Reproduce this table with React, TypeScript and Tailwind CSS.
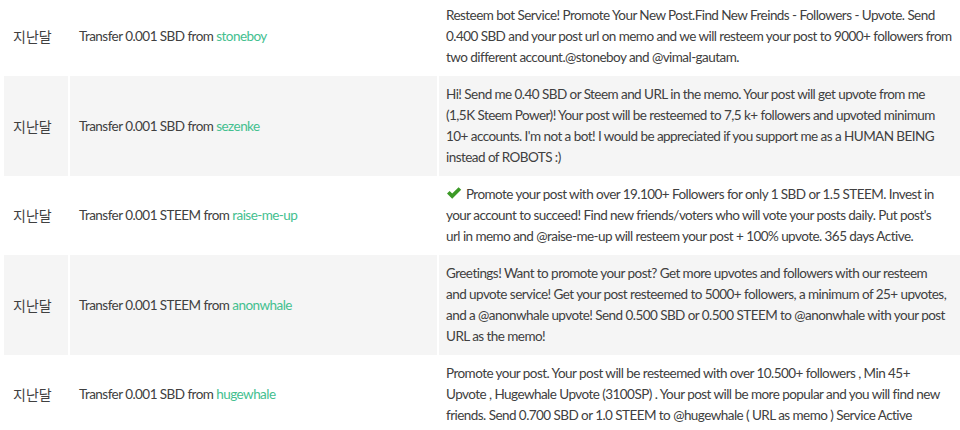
import React from "react";

type Row = {
  amount: string;
  from: string;
  lines: string[];
  check?: boolean;
};

const rows: Row[] = [
  {
    amount: "0.001 SBD",
    from: "stoneboy",
    lines: [
      "Resteem bot Service! Promote Your New Post.Find New Freinds - Followers - Upvote. Send",
      "0.400 SBD and your post url on memo and we will resteem your post to 9000+ followers from",
      "two different account.@stoneboy and @vimal-gautam.",
    ],
  },
  {
    amount: "0.001 SBD",
    from: "sezenke",
    lines: [
      "Hi! Send me 0.40 SBD or Steem and URL in the memo. Your post will get upvote from me",
      "(1,5K Steem Power)! Your post will be resteemed to 7,5 k+ followers and upvoted minimum",
      "10+ accounts. I'm not a bot! I would be appreciated if you support me as a HUMAN BEING",
      "instead of ROBOTS :)",
    ],
  },
  {
    amount: "0.001 STEEM",
    from: "raise-me-up",
    check: true,
    lines: [
      " Promote your post with over 19.100+ Followers for only 1 SBD or 1.5 STEEM. Invest in",
      "your account to succeed! Find new friends/voters who will vote your posts daily. Put post's",
      "url in memo and @raise-me-up will resteem your post + 100% upvote. 365 days Active.",
    ],
  },
  {
    amount: "0.001 STEEM",
    from: "anonwhale",
    lines: [
      "Greetings! Want to promote your post? Get more upvotes and followers with our resteem",
      "and upvote service! Get your post resteemed to 5000+ followers, a minimum of 25+ upvotes,",
      "and a @anonwhale upvote! Send 0.500 SBD or 0.500 STEEM to @anonwhale with your post",
      "URL as the memo!",
    ],
  },
  {
    amount: "0.001 SBD",
    from: "hugewhale",
    lines: [
      "Promote your post. Your post will be resteemed with over 10.500+ followers , Min 45+",
      "Upvote , Hugewhale Upvote (3100SP) . Your post will be more popular and you will find new",
      "friends. Send 0.700 SBD or 1.0 STEEM to @hugewhale ( URL as memo ) Service Active",
    ],
  },
];

function Check() {
  return (
    <svg width="16" height="14" viewBox="0 0 16 14" className="inline-block align-[-1px] mr-[1px]">
      <path d="M1 7.5 L3.6 5 L6.2 7.6 L12.6 1.2 L15.2 3.8 L6.2 12.8 Z" fill="#3c9a27" />
    </svg>
  );
}

export default function App() {
  return (
    <div
      className="w-[960px] h-[430px] overflow-hidden bg-white text-[#404040]"
      style={{ fontFamily: "Lato, 'Noto Sans CJK KR', sans-serif" }}
    >
      <div className="-mt-[3px] ml-[4px] grid grid-cols-[64px_367px_1fr] gap-x-[2px] text-[13.5px] leading-[21px] tracking-[-0.55px]">
        {rows.map((r, i) => {
          const bg = i % 2 === 1 ? "bg-[#f5f5f5]" : "bg-white";
          return (
            <React.Fragment key={i}>
              <div
                className={`${bg} py-2 pl-[9px] flex items-center text-[14px] tracking-normal`}
                style={{ fontFamily: "'Noto Sans CJK KR', sans-serif" }}
              >
                지난달
              </div>
              <div className={`${bg} py-2 pl-[9px] flex items-center`}>
                <span>
                  Transfer {r.amount} from <span className="text-[#44c08f]">{r.from}</span>
                </span>
              </div>
              <div className={`${bg} py-2 pl-[7px] whitespace-nowrap overflow-hidden`}>
                {r.lines.map((l, j) => (
                  <div key={j}>
                    {j === 0 && r.check ? <Check /> : null}
                    {l}
                  </div>
                ))}
              </div>
            </React.Fragment>
          );
        })}
      </div>
    </div>
  );
}
